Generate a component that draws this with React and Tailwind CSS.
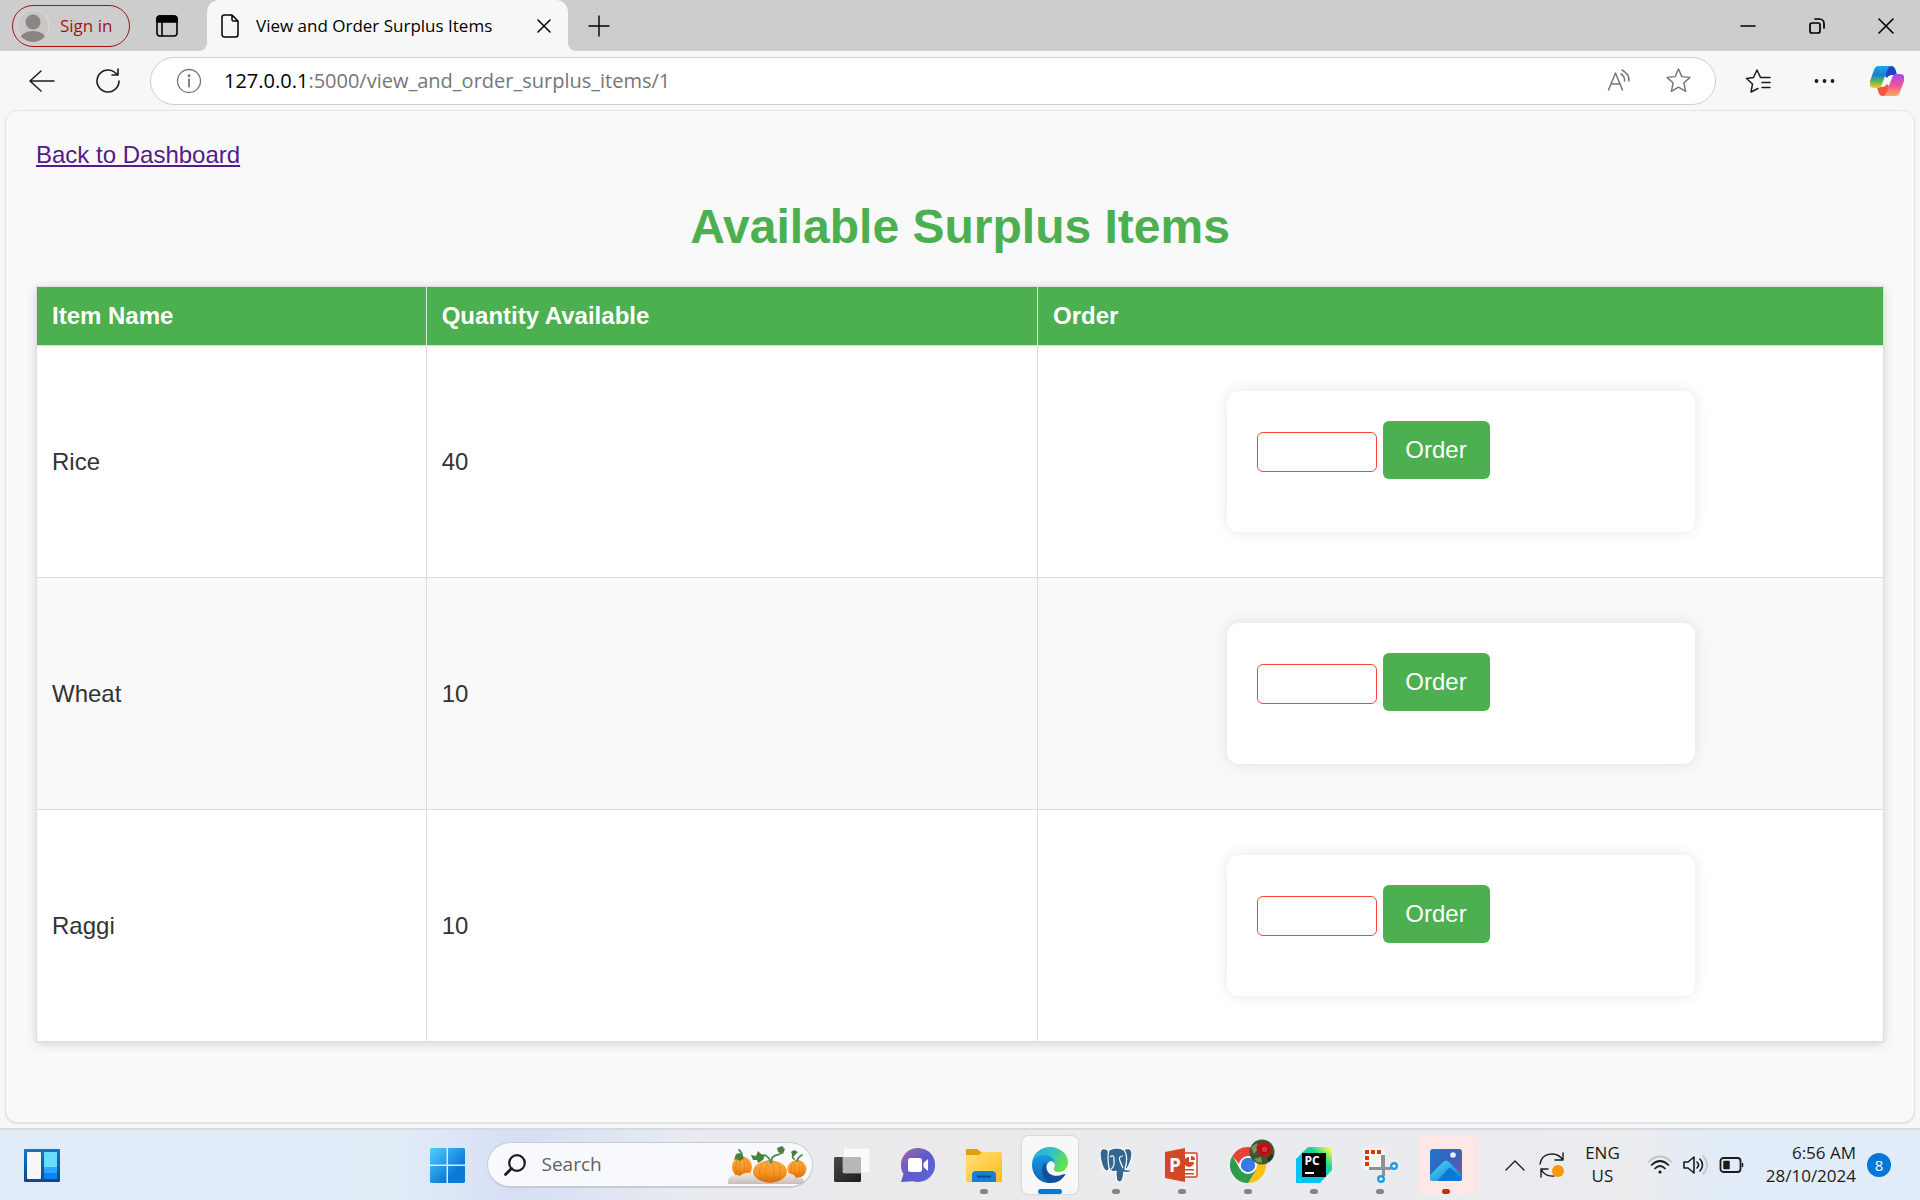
const UI = "font-['Open_Sans',sans-serif]";

const items = [
  { name: 'Rice', quantity: 40 },
  { name: 'Wheat', quantity: 10 },
  { name: 'Raggi', quantity: 10 },
];

const stroke = { fill: 'none', stroke: 'currentColor', strokeLinecap: 'round', strokeLinejoin: 'round' };

function TabStrip() {
  return (
    <header className="flex h-[51px] items-center bg-[#cdcdcd] text-black">
      <button className="ml-3 flex h-[42px] w-[118px] shrink-0 items-center rounded-full border border-[#a61212] pl-[3px] text-[17px] text-[#a61212]">
        <svg viewBox="0 0 34 34" className="mr-2.5 size-[34px]" aria-hidden="true">
          <clipPath id="avatar"><circle cx="17" cy="17" r="16" /></clipPath>
          <circle cx="17" cy="17" r="16" fill="#c9c7c5" stroke="#dddbd8" />
          <g fill="#8a8582" clipPath="url(#avatar)">
            <circle cx="17" cy="13" r="7.5" />
            <ellipse cx="17" cy="29.500" rx="12.500" ry="7.500" />
          </g>
        </svg>
        <span className="whitespace-nowrap">Sign in</span>
      </button>
      <button aria-label="Tab actions menu" className="ml-[26px] shrink-0">
        <svg viewBox="0 0 22 22" className="size-[22px]" {...stroke} strokeWidth="1.6">
          <rect x="1" y="1" width="20" height="20" rx="3" />
          <path d="M1 7V4a3 3 0 0 1 3-3h14a3 3 0 0 1 3 3v3z" fill="currentColor" />
          <path d="M6 7v14" />
        </svg>
      </button>
      <div className="relative ml-[29px] flex h-full w-[361px] items-center rounded-t-xl bg-[#f7f7f7] px-3.5">
        <svg viewBox="0 0 8 8" className="absolute -left-2 bottom-0 size-2" aria-hidden="true"><path d="M8 0v8H0a8 8 0 0 0 8-8z" fill="#f7f7f7" /></svg>
        <svg viewBox="0 0 8 8" className="absolute -right-2 bottom-0 size-2" aria-hidden="true"><path d="M0 0v8h8a8 8 0 0 1-8-8z" fill="#f7f7f7" /></svg>
        <svg viewBox="0 0 18 24" className="h-6 w-[18px] shrink-0" {...stroke} strokeWidth="1.5" aria-hidden="true">
          <path d="M3 1h8l6 6v13.500a2.500 2.500 0 0 1-2.500 2.500h-11A2.500 2.500 0 0 1 1 20.500v-17A2.500 2.500 0 0 1 3 1zM11 1v4.500A1.500 1.500 0 0 0 12.500 7H17" />
        </svg>
        <span className="ml-[17px] grow whitespace-nowrap text-[17px]">View and Order Surplus Items</span>
        <button aria-label="Close tab" className="mr-[3px]">
          <svg viewBox="0 0 14 14" className="size-3.5" {...stroke} strokeWidth="1.5"><path d="M1 1l12 12M13 1L1 13" /></svg>
        </button>
      </div>
      <button aria-label="New tab" className="ml-5">
        <svg viewBox="0 0 22 22" className="size-[22px]" {...stroke} strokeWidth="1.4"><path d="M11 1v20M1 11h20" /></svg>
      </button>
      <div className="ml-auto flex items-center gap-[53px] pr-[26px]">
        <button aria-label="Minimize">
          <svg viewBox="0 0 16 16" className="size-4" {...stroke} strokeWidth="1.6"><path d="M1 8h14" /></svg>
        </button>
        <button aria-label="Restore">
          <svg viewBox="0 0 16 16" className="size-4" {...stroke} strokeWidth="1.7">
            <rect x="1" y="5" width="10" height="10" rx="2" /><path d="M6 1h4.500A4.500 4.500 0 0 1 15 5.500V10" />
          </svg>
        </button>
        <button aria-label="Close">
          <svg viewBox="0 0 16 16" className="size-4" {...stroke} strokeWidth="1.6"><path d="M1 1l14 14M15 1L1 15" /></svg>
        </button>
      </div>
    </header>
  );
}

const STAR = 'M12 1l3.200 7.300 7.800.7-5.900 5.400 1.800 8-6.900-4-6.900 4 1.800-8L1 9l7.800-.7z';
const RIBBON = 'M9 0h13c-3 0-4 2-5 5l-5 13c-1 3-2 4-5 4H4c-4 0-5-3-4-7L4 4c1-3 2-4 5-4z';

function Toolbar() {
  return (
    <nav className="flex h-[59px] items-center bg-[#f7f7f7] pl-[29px] pr-4 text-[#1b1b1b]">
      <button aria-label="Back">
        <svg viewBox="0 0 26 24" className="h-6 w-[26px]" {...stroke} strokeWidth="1.5"><path d="M25 12H1M12 2L1 12l11 10" /></svg>
      </button>
      <button aria-label="Refresh" className="ml-10">
        <svg viewBox="0 0 26 26" className="size-[26px]" {...stroke} strokeWidth="1.6">
          <path d="M24 13A11 11 0 1 1 20 4.500L23 7M23 1v6h-6" />
        </svg>
      </button>
      <div className="ml-[29px] flex h-12 grow items-center rounded-full border border-[#cfcfcf] bg-white pl-[25px] pr-6 text-[#767676]">
        <svg viewBox="0 0 26 26" className="size-[26px] shrink-0" {...stroke} strokeWidth="1.3" aria-hidden="true">
          <circle cx="13" cy="13" r="11.500" /><path d="M13 11.500v7" strokeWidth="1.800" /><circle cx="13" cy="7.800" r=".8" fill="currentColor" />
        </svg>
        <div className="ml-[22px] grow whitespace-nowrap text-[20px]"><span className="text-black">127.0.0.1</span>:5000/view_and_order_surplus_items/1</div>
        <button aria-label="Read aloud" className="mr-[35px]">
          <svg viewBox="0 0 24 24" className="size-6" {...stroke} strokeWidth="1.500">
            <path d="M1.500 21L8.500 4l7 17M4 15h9M14 5q4 2.500 3.500 7M15 1q7.500 4 7 11" />
          </svg>
        </button>
        <button aria-label="Add to favorites">
          <svg viewBox="0 0 24 24" className="size-[25px]" {...stroke} strokeWidth="1.400"><path d={STAR} /></svg>
        </button>
      </div>
      <button aria-label="Favorites" className="ml-[29px]">
        <svg viewBox="0 0 26 24" className="h-6 w-[26px]" {...stroke} strokeWidth="1.500">
          <path d="M13 19.500L6 23l1.500-8L1.500 9.500l7-1L12 1l3.500 7.500H25M17 13.500h8M17 18.500h8" />
        </svg>
      </button>
      <button aria-label="Settings and more" className="ml-[43px]">
        <svg viewBox="0 0 22 22" className="size-[22px]" fill="currentColor"><circle cx="2.500" cy="11" r="1.900" /><circle cx="10.500" cy="11" r="1.900" /><circle cx="18.500" cy="11" r="1.900" /></svg>
      </button>
      <button aria-label="Copilot" className="ml-[34px]">
        <svg viewBox="0 0 34 30" className="h-[30px] w-[34px]">
          <defs>
            <linearGradient id="cpA" x1="0" y1="0" x2="0" y2="1"><stop offset="0" stopColor="#1aa7ee" /><stop offset=".4" stopColor="#1a7fd0" /><stop offset=".7" stopColor="#5cb85a" /><stop offset="1" stopColor="#ffd20a" /></linearGradient>
            <linearGradient id="cpB" x1="0" y1="1" x2="0" y2="0"><stop offset="0" stopColor="#a54cf0" /><stop offset=".5" stopColor="#f0529a" /><stop offset="1" stopColor="#ffa95a" /></linearGradient>
          </defs>
          <path d="M17 0h4c3 0 4 2 5 5l1 4h-5c-2 0-4 1-5 3l-2-2z" fill="#1b46c8" />
          <path d="M17 30h-4c-3 0-4-2-5-5l-1-4h5c2 0 4-1 5-3l2 2z" fill="#f4573c" />
          <path d={RIBBON} fill="url(#cpA)" />
          <path d={RIBBON} fill="url(#cpB)" transform="rotate(180 17 15)" />
        </svg>
      </button>
    </nav>
  );
}

function OrderForm({ item }) {
  return (
    <form
      onSubmit={(e) => e.preventDefault()}
      className="mx-auto my-[30px] flex h-[141px] w-[468px] items-start gap-1.5 rounded-xl bg-white p-[30px] shadow-[0_0_15px_rgba(0,0,0,0.1)]"
    >
      <input
        aria-label={`Quantity of ${item.name}`}
        className="mt-[11px] h-10 w-[120px] rounded-md border border-[#f44336] bg-white px-2 text-base outline-none"
      />
      <button className="h-[58px] w-[107px] rounded-md bg-[#4caf50] text-2xl text-white">Order</button>
    </form>
  );
}

function Page() {
  const cell = 'border border-[#dddddd] px-[15px] text-left';
  return (
    <main className="mx-[5px] mb-[5px] grow rounded-xl border border-[#e4e4e4] bg-[#f9f9f9] px-[30px] pt-[30px] font-['Liberation_Sans',Arial,sans-serif] text-2xl text-[#333333] shadow-[0_1px_1px_#dddddd]">
      <a href="#dashboard" className="block w-fit leading-7 text-[#551a8b] underline">Back to Dashboard</a>
      <h1 className="mb-[31px] mt-[30px] text-center text-5xl font-bold leading-[56px] text-[#4caf50]">Available Surplus Items</h1>
      <table className="w-full table-fixed border-collapse bg-white shadow-[0_2px_10px_rgba(0,0,0,0.15)]">
        <colgroup>
          <col className="w-[21.1%]" />
          <col className="w-[33.1%]" />
          <col />
        </colgroup>
        <thead>
          <tr className="h-[59px] bg-[#4caf50] text-white">
            <th className={cell}>Item Name</th>
            <th className={cell}>Quantity Available</th>
            <th className={cell}>Order</th>
          </tr>
        </thead>
        <tbody>
          {items.map((item) => (
            <tr key={item.name} className="even:bg-[#f9f9f9]">
              <td className={cell}>{item.name}</td>
              <td className={cell}>{item.quantity}</td>
              <td className="border border-[#dddddd] p-[15px]"><OrderForm item={item} /></td>
            </tr>
          ))}
        </tbody>
      </table>
    </main>
  );
}

function Pumpkin({ x, y, rx, ry }) {
  return (
    <g transform={`translate(${x} ${y})`}>
      <ellipse rx={rx} ry={ry} fill="url(#pump)" />
      <ellipse rx={rx * 0.62} ry={ry} fill="none" stroke="#d9750f" strokeWidth=".6" />
      <ellipse rx={rx * 0.25} ry={ry} fill="none" stroke="#dd7c14" strokeWidth=".6" />
    </g>
  );
}

const Pumpkins = () => (
  <svg viewBox="0 0 80 38" className="h-[38px] w-20 shrink-0" aria-hidden="true">
    <defs>
      <linearGradient id="pump" x1="0" y1="0" x2="0" y2="1"><stop offset="0" stopColor="#fdb04a" /><stop offset=".6" stopColor="#f6921f" /><stop offset="1" stopColor="#d06c0e" /></linearGradient>
      <linearGradient id="stone" x1="0" y1="0" x2="0" y2="1"><stop offset="0" stopColor="#f0ebe7" /><stop offset="1" stopColor="#c8bdb8" /></linearGradient>
    </defs>
    <Pumpkin x={14} y={21} rx={10} ry={10.500} />
    <Pumpkin x={69} y={23} rx={9.500} ry={9} />
    <path d="M0 38q-1-9 8-9 2 0 4 1 4-4 11-3 5 1 7 4h26q3-5 8-3 3 1 4 4 8-3 8 5l-3 1z" fill="url(#stone)" />
    <Pumpkin x={42} y={25.500} rx={17} ry={11} />
    <g fill="none" stroke="#4b9257" strokeWidth="1.800" strokeLinecap="round">
      <path d="M14 12q1-5-3-8M69 15q1-4 5-6M43 17q-1-5-6-8M43 17q0-7 6-8 6-1 4-6M66 13q-2-1-1-4" />
    </g>
    <g fill="#4a7f3d">
      <path d="M6 14l2-6 4-1 4 5-4 3-4-2zM23 9l5 1 2-5 3 3 4 1-2 5-5 3-1-3-4 0zM49 2l5-2 3 3-2 5-5-2zM63 6l3-2 4 2-3 3-2 2z" />
    </g>
  </svg>
);

const TaskView = () => (
  <svg viewBox="0 0 36 34" className="h-[34px] w-9">
    <defs><linearGradient id="tv" x1="0" y1="0" x2="1" y2="1"><stop offset="0" stopColor="#484848" /><stop offset="1" stopColor="#1b1b1b" /></linearGradient></defs>
    <rect y="9" width="27" height="25" rx="1.500" fill="url(#tv)" />
    <rect x="9" y="0" width="27" height="25" rx="1.500" fill="#fff" fillOpacity=".75" stroke="#dedede" strokeWidth=".6" />
    <path d="M9 9h18v16H9z" fill="#b7b7b7" />
  </svg>
);

const Chat = () => (
  <svg viewBox="0 0 34 34" className="size-[34px]">
    <defs><linearGradient id="chat" x1="0" y1="0" x2="1" y2="1"><stop offset="0" stopColor="#a566a8" /><stop offset=".5" stopColor="#5c5bc8" /><stop offset="1" stopColor="#5a68dc" /></linearGradient></defs>
    <path d="M17 0a17 17 0 1 1-5 33.200L0 34l2.500-8A17 17 0 0 1 17 0z" fill="url(#chat)" />
    <rect x="7" y="10" width="14" height="14" rx="2.500" fill="#fff" /><path d="M22.500 15l4.500-4v12l-4.500-4z" fill="#fff" />
  </svg>
);

const Explorer = () => (
  <svg viewBox="0 0 36 34" className="h-[34px] w-9">
    <defs><linearGradient id="fold" x1="0" y1="0" x2="1" y2="1"><stop offset="0" stopColor="#ffe07a" /><stop offset="1" stopColor="#fbbc1b" /></linearGradient></defs>
    <path d="M0 2q0-1 1-1h10l4 3h20v14H0z" fill="#e0a00a" />
    <path d="M0 7h13l3-3h18q2 0 2 2v28H0z" fill="url(#fold)" />
    <path d="M6 34V27q0-4 4-4h16q4 0 4 4v7z" fill="#1580d8" /><path d="M11 28.500h14" stroke="#0b4b94" strokeWidth="2" />
  </svg>
);

const Edge = () => (
  <svg viewBox="0 0 36 36" className="size-9">
    <defs>
      <linearGradient id="eg1" x1="0" y1="0" x2="1" y2=".4"><stop offset="0" stopColor="#2aa8e0" /><stop offset=".55" stopColor="#30c2c8" /><stop offset="1" stopColor="#64e04e" /></linearGradient>
      <linearGradient id="eg2" x1="0" y1="0" x2="0" y2="1"><stop offset="0" stopColor="#1a9be0" /><stop offset="1" stopColor="#0b62b8" /></linearGradient>
    </defs>
    <path d="M0 16C1 6 9 0 18 0c10 0 18 7 18 15 0 6-4 10-9 10-4 0-6-2-5-4 2-3 0-10-8-11C7 9 2 12 0 16z" fill="url(#eg1)" />
    <path d="M0 18c0-7 6-10 12-10 7 0 11 5 11 9-1-3-5-4-7-1-4 5 1 14 9 15l-6 5C8 37 0 28 0 18z" fill="url(#eg2)" />
    <path d="M14 15c-6 4-6 17 5 21 6 0 11-3 14-8 1-1 0-1-1-1-8 4-17 1-18-6-1-3 0-5 0-6z" fill="#114f9e" />
  </svg>
);

const Postgres = () => (
  <svg viewBox="0 0 34 36" className="h-9 w-[34px]">
    <g fill="#336791" stroke="#fff" strokeWidth="1.200" strokeLinejoin="round">
      <path d="M9 3Q2-1 1 6c0 6 2 16 6 18 2 1 4-3 5-4zM24 3q8-4 9 3c0 5-2 11-5 16l-6-1z" />
      <path d="M10 3q8-4 15 0c4 5 3 12 1 19 2 2 5 0 7 1-2 3-6 3-8 2-1 6-1 10-4 10-4 1-4-4-4-11-3 2-6 0-7-3-1-6-2-12 0-18z" />
    </g>
    <path d="M11 10q4-3 4 2c0 4 1 8-3 10M24 9q-5 0-3 5c1 3 2 5 3 7" fill="none" stroke="#fff" strokeWidth="1.200" />
  </svg>
);

const PowerPoint = () => (
  <svg viewBox="0 0 33 34" className="h-[34px] w-[33px]">
    <rect x="15" y="5" width="17" height="24" rx="1" fill="#fff" stroke="#d24726" strokeWidth="1.500" />
    <path d="M24 9a5 5 0 1 0 5 5h-5z" fill="#d24726" /><path d="M26 8v4h4a4 4 0 0 0-4-4zM20 21h9v1.500h-9zM20 25h9v1.500h-9z" fill="#d24726" />
    <path d="M0 4l20-4v34L0 30z" fill="#d24726" />
    <text x="4" y="24" fontSize="19" fontWeight="700" fill="#fff" className="font-['Open_Sans',sans-serif]">P</text>
  </svg>
);

const Chrome = () => (
  <svg viewBox="0 0 46 44" className="h-11 w-[46px] shrink-0">
    <path d="M18 17h15.600A18 18 0 0 1 18 44l8-13z" fill="#fbc116" />
    <path d="M10 30L2.400 17A18 18 0 0 0 18 44l8-13z" fill="#2d9c4c" />
    <path d="M18 26h-8L2.400 17A18 18 0 0 1 33.600 17H18z" fill="#ea4335" />
    <circle cx="18" cy="26" r="9" fill="#fff" /><circle cx="18" cy="26" r="7.200" fill="#3b78e7" />
    <circle cx="32" cy="13" r="12.500" fill="#375c2d" />
    <path d="M21 8l6-4 2 5-5 6zM24 20l7-2 1 6-5-1z" fill="#7a9462" /><path d="M37 20l5-6 1 4-4 5z" fill="#1d3a1b" />
    <path d="M27 6q5-5 11-2 6 3 3 10-4 6-10 3-6-4-4-11z" fill="#c1121b" /><path d="M31 8q4-3 7 0 1 5-3 6-5-1-4-6" fill="#e0313a" stroke="#7e0b12" />
  </svg>
);

const PyCharm = () => (
  <svg viewBox="0 0 36 36" className="size-9">
    <defs><linearGradient id="pyc" x1="0" y1="1" x2="1" y2="0"><stop offset=".45" stopColor="#07c3f2" /><stop offset=".7" stopColor="#21d789" /><stop offset=".95" stopColor="#fcf84a" /></linearGradient></defs>
    <path d="M0 12L12 0h24v23L24 36H0z" fill="url(#pyc)" /><path d="M6 6h24v24H6z" />
    <text x="8.500" y="18" fontSize="12" fontWeight="700" fill="#fff" className="font-['Open_Sans',sans-serif]">PC</text>
    <path d="M9 25h9v2H9z" fill="#fff" />
  </svg>
);

const Snip = () => (
  <svg viewBox="0 0 36 36" className="size-9">
    <rect x="1" y="1" width="22" height="22" rx="2" fill="#f5f5f5" />
    <g fill="#d83b01"><path d="M3 3h4v4H3zM9 3h4v4H9zM15 3h4v4h-4zM3 9h4v4H3zM3 15h4v4H3z" /></g>
    <path d="M19 8h4v12h6v3h-6v6h-3v-6H7v-3h12z" fill="#8b9298" />
    <g fill="#fff" stroke="#1b9de8" strokeWidth="2.400"><circle cx="32" cy="19" r="2.800" /><circle cx="19" cy="32" r="2.800" /></g>
  </svg>
);

const Photos = () => (
  <svg viewBox="0 0 32 32" className="size-8">
    <defs><linearGradient id="ph1" x1="0" y1="0" x2="1" y2="1"><stop offset="0" stopColor="#2078d0" /><stop offset=".5" stopColor="#3a62b8" /><stop offset="1" stopColor="#8a4fb0" /></linearGradient>
      <linearGradient id="ph2" x1="0" y1="0" x2="1" y2="1"><stop offset="0" stopColor="#4fd8f8" /><stop offset="1" stopColor="#0a78d4" /></linearGradient>
      <clipPath id="phc"><rect width="32" height="32" rx="3" /></clipPath></defs>
    <g clipPath="url(#phc)"><rect width="32" height="32" fill="url(#ph1)" />
      <path d="M-1 27l14-14q3-3 6 0l14 14v7H-1z" fill="url(#ph2)" /><path d="M6 33l12-13q2-2 4 0l12 12v3z" fill="#0a78d4" />
      <circle cx="23" cy="6" r="2.800" fill="#eef" /></g>
  </svg>
);

const apps = [
  { name: 'File Explorer', Icon: Explorer, mark: 'w-2 bg-[#858585]' },
  { name: 'Microsoft Edge', Icon: Edge, mark: 'w-6 bg-[#0078d7]', tile: 'bg-[#f8f8f8] shadow-[0_0_2px_#b0b0b0]' },
  { name: 'PostgreSQL', Icon: Postgres, mark: 'w-2 bg-[#858585]' },
  { name: 'PowerPoint', Icon: PowerPoint, mark: 'w-2 bg-[#858585]' },
  { name: 'Chrome', Icon: Chrome, mark: 'w-2 bg-[#858585]', shift: 'pb-2 pl-2.5' },
  { name: 'PyCharm', Icon: PyCharm, mark: 'w-2 bg-[#858585]' },
  { name: 'Snipping Tool', Icon: Snip, mark: 'w-2 bg-[#858585]' },
  { name: 'Photos', Icon: Photos, mark: 'w-2 bg-[#c42b1c]', tile: 'bg-[#fde7e7] shadow-[3px_0_0_#f4e6e6,6px_0_0_#fde7e7]' },
];

function AppButton({ name, Icon, mark, tile = '', shift = '' }) {
  return (
    <button aria-label={name} className={`relative flex h-[58px] w-14 items-center justify-center rounded-md ${tile}`}>
      <span className={`flex shrink-0 ${shift}`}><Icon /></span>
      {mark && <span className={`absolute bottom-0 left-1/2 h-[5px] -translate-x-1/2 rounded-full ${mark}`} />}
    </button>
  );
}

function Taskbar() {
  return (
    <footer className="grid h-[72px] shrink-0 grid-cols-[1fr_auto_1fr] items-center border-t-2 border-[#d6dae0] bg-[linear-gradient(90deg,#e0ecf8_0%,#e2ecf7_21%,#d6def4_27%,#e8ebf0_36%,#ece9ea_51%,#e9ebef_66%,#ebecee_85%,#e1ecf8_90%,#e0ecf8_100%)] pl-6 pr-[29px] text-[#1b1b1b]">
      <button aria-label="Widgets" className="w-fit">
        <svg viewBox="0 0 36 33" className="h-[33px] w-9">
          <defs><linearGradient id="wd" x1="0" y1="0" x2="0" y2="1"><stop offset="0" stopColor="#0f78cc" /><stop offset="1" stopColor="#10468a" /></linearGradient></defs>
          <rect width="36" height="33" rx="1" fill="url(#wd)" /><rect x="3" y="3" width="14" height="27" rx="1" fill="#f8f8f8" />
          <path d="M20 3h13v15H20z" fill="#6adcff" /><path d="M20 18h13v6H20z" fill="#28a8ff" /><path d="M20 24h13v6H20z" fill="#0a84f0" />
        </svg>
      </button>
      <div className="flex items-center pr-3">
        <button aria-label="Start" className="mr-[22px]">
          <svg viewBox="0 0 35 35" className="size-[35px]">
            <defs><linearGradient id="win" gradientUnits="userSpaceOnUse" x1="0" y1="0" x2="35" y2="35"><stop offset="0" stopColor="#4fd0fc" /><stop offset=".7" stopColor="#0a7ad8" /></linearGradient></defs>
            <path d="M1 0h15.500v16.500H0V1zM18 0h16l1 1v15.500H18zM0 18h16.500v17H1l-1-1zM18 18h17v16l-1 1H18z" fill="url(#win)" />
          </svg>
        </button>
        <label className="mr-[11px] flex h-[46px] w-[326px] shrink-0 items-center rounded-full border border-b-2 border-[#c8cbd6] bg-[#f8f9fc] pl-4 pr-1">
          <svg viewBox="0 0 22 22" className="size-[22px] shrink-0" {...stroke} strokeWidth="2.200" aria-hidden="true"><circle cx="13" cy="9" r="7.800" /><path d="M7.500 14.500L1.500 20.500" strokeWidth="2.800" /></svg>
          <input type="search" aria-label="Search" placeholder="Search" className="ml-4 min-w-0 grow bg-transparent text-[19px] outline-none placeholder:text-[#606060]" />
          <Pumpkins />
        </label>
        <div className="flex items-center gap-2.5">
          <AppButton name="Task View" Icon={TaskView} />
          <AppButton name="Chat" Icon={Chat} />
          {apps.map((app) => <AppButton key={app.name} {...app} />)}
        </div>
      </div>
      <div className="flex items-center justify-end text-[17px] leading-[23px]">
        <button aria-label="Show hidden icons">
          <svg viewBox="0 0 20 12" className="h-3 w-5" {...stroke} strokeWidth="1.400"><path d="M1 11l9-9 9 9" /></svg>
        </button>
        <svg viewBox="0 0 26 26" className="ml-3.5 size-[26px]" {...stroke} strokeWidth="1.400" aria-hidden="true">
          <path d="M1 12C3 0 18-1 24 8M24 1v7h-8M2 25v-8h7M2 17q4 8 13 7" /><circle cx="19" cy="19" r="6" fill="#ff9800" stroke="none" />
        </svg>
        <div className="ml-5 pb-0.5 text-center">ENG<br />US</div>
        <svg viewBox="0 0 26 20" className="ml-[27px] h-5 w-[26px]" {...stroke} strokeWidth="1.700" aria-hidden="true">
          <path d="M1.500 7q11.500-11 23 0" stroke="#c2c2c2" /><path d="M4.500 10q8.500-8 17 0M8 13.500q5-5 10 0" /><circle cx="13" cy="17" r="1.600" fill="currentColor" stroke="none" />
        </svg>
        <svg viewBox="0 0 26 22" className="ml-2.5 h-[22px] w-[26px]" {...stroke} strokeWidth="1.600" aria-hidden="true">
          <path d="M1 8v6h4l6 5V3L5 8zM14 8q3 3 0 6M17 5q5 6 0 12" /><path d="M20 2q8 9 0 18" stroke="#c2c2c2" />
        </svg>
        <svg viewBox="0 0 26 18" className="ml-2.5 h-[18px] w-[26px]" {...stroke} strokeWidth="1.800" aria-hidden="true">
          <rect x="1.500" y="2" width="20" height="14" rx="3" /><path d="M5 5.500h5v7H5zM23.500 7.500v3" fill="currentColor" strokeWidth="1.500" />
        </svg>
        <div className="ml-[21px] pb-0.5 text-right">6:56 AM<br />28/10/2024</div>
        <span className="ml-[11px] flex size-6 items-center justify-center rounded-full bg-[#0078d7] text-[15px] text-white">8</span>
      </div>
    </footer>
  );
}

export default function App() {
  return (
    <div className={`flex min-h-screen flex-col bg-[#f7f7f7] ${UI}`}>
      <TabStrip />
      <Toolbar />
      <Page />
      <Taskbar />
    </div>
  );
}
